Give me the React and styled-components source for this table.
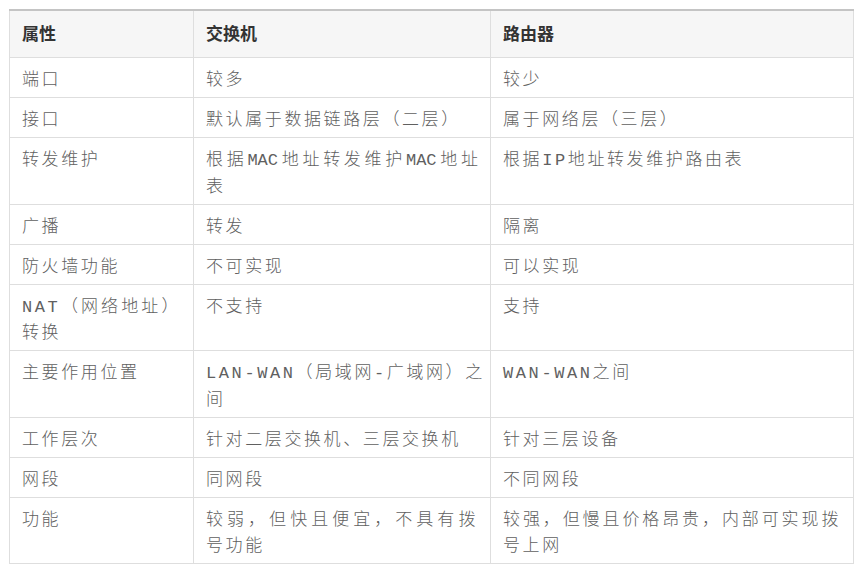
import React from 'react';
import styled, { createGlobalStyle } from 'styled-components';

const GlobalStyle = createGlobalStyle`
	html, body {
		margin: 0;
		padding: 0;
		background: #ffffff;
	}
`;

const Page = styled.div`
	padding: 9px 0 0 9px;
`;

const Table = styled.table`
	width: 844px;
	table-layout: fixed;
	border-collapse: collapse;
	border-top: 2px solid #c4c4c4;
`;

const HeadCell = styled.th`
	padding: 11px 12px 9px 12px;
	border: 1px solid #dedede;
	border-top: 2px solid #c4c4c4;
	background: #f6f6f6;
	text-align: left;
	font-family: "Liberation Sans", "Noto Sans CJK SC", sans-serif;
	font-size: 17px;
	font-weight: bold;
	line-height: 26px;
	color: #333333;
`;

const Cell = styled.td`
	padding: 10px 12px 2.5px 12px;
	border: 1px solid #dedede;
	vertical-align: top;
	font-family: "Liberation Mono", "Noto Sans CJK SC", monospace;
	font-size: 17px;
	font-weight: 300;
	line-height: 26.5px;
	letter-spacing: 2.6px;
	color: #606060;
`;

const Line = styled.span`
	display: block;
	white-space: nowrap;
	text-align: left;
	text-align-last: ${props => (props.spread ? 'justify' : 'auto')};
	letter-spacing: ${props => (props.tight ? '0px' : 'inherit')};
`;

const columns = [
	{ title: '属性', width: 184 },
	{ title: '交换机', width: 297 },
	{ title: '路由器', width: 363 },
];

const rows = [
	['端口', '较多', '较少'],
	['接口', '默认属于数据链路层（二层）', '属于网络层（三层）'],
	['转发维护', { lines: ['根据MAC地址转发维护MAC地址', '表'], tight: true }, '根据IP地址转发维护路由表'],
	['广播', '转发', '隔离'],
	['防火墙功能', '不可实现', '可以实现'],
	[{ lines: ['NAT（网络地址）', '转换'] }, '不支持', '支持'],
	['主要作用位置', { lines: ['LAN-WAN（局域网-广域网）之', '间'] }, 'WAN-WAN之间'],
	['工作层次', '针对二层交换机、三层交换机', '针对三层设备'],
	['网段', '同网段', '不同网段'],
	['功能', { lines: ['较弱，但快且便宜，不具有拨', '号功能'] }, { lines: ['较强，但慢且价格昂贵，内部可实现拨', '号上网'] }],
];

const CellText = ({ value }) => {
	if (typeof value === 'string') {
		return <Line>{value}</Line>;
	}
	return value.lines.map((text, idx) => {
		const wrapped = idx < value.lines.length - 1;
		return (
			<Line key={text + idx} spread={wrapped} tight={wrapped && value.tight}>
				{text}
			</Line>
		);
	});
};

const App = () => {
	return (
		<Page>
			<GlobalStyle />
			<Table>
				<colgroup>
					{columns.map(col => <col key={col.title} style={{ width: col.width }} />)}
				</colgroup>
				<thead>
					<tr>
						{columns.map(col => <HeadCell key={col.title}>{col.title}</HeadCell>)}
					</tr>
				</thead>
				<tbody>
					{rows.map((row, idx) => (
						<tr key={idx}>
							{row.map((value, cidx) => (
								<Cell key={cidx}>
									<CellText value={value} />
								</Cell>
							))}
						</tr>
					))}
				</tbody>
			</Table>
		</Page>
	);
};

export default App;
